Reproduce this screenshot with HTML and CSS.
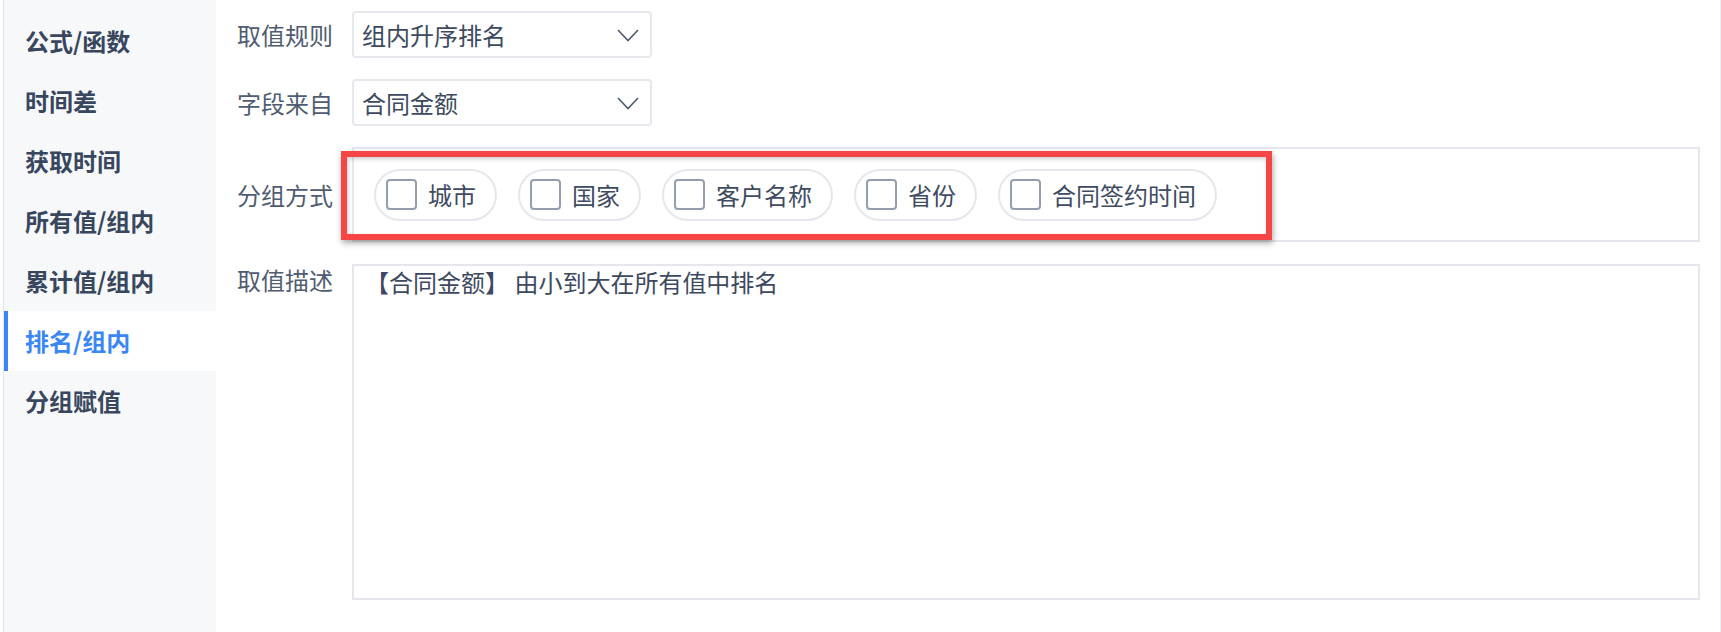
FILE: index.html
```html
<!DOCTYPE html>
<html lang="zh-CN">
<head>
<meta charset="utf-8">
<title>排名/组内</title>
<link rel="stylesheet" href="styles.css">
</head>
<body>
<div class="app">
  <aside class="sidebar">
    <ul class="nav">
      <li class="nav-item">公式/函数</li>
      <li class="nav-item">时间差</li>
      <li class="nav-item">获取时间</li>
      <li class="nav-item">所有值/组内</li>
      <li class="nav-item">累计值/组内</li>
      <li class="nav-item active">排名/组内</li>
      <li class="nav-item">分组赋值</li>
    </ul>
  </aside>
  <main class="form">
    <div class="row">
      <label class="label">取值规则</label>
      <div class="select">
        <span class="select-text">组内升序排名</span>
        <svg class="chevron" width="22" height="13" viewBox="0 0 22 13"><polyline points="1,1 11,11.5 21,1" fill="none" stroke="#4f5a6f" stroke-width="1.6"/></svg>
      </div>
    </div>
    <div class="row">
      <label class="label">字段来自</label>
      <div class="select">
        <span class="select-text">合同金额</span>
        <svg class="chevron" width="22" height="13" viewBox="0 0 22 13"><polyline points="1,1 11,11.5 21,1" fill="none" stroke="#4f5a6f" stroke-width="1.6"/></svg>
      </div>
    </div>
    <div class="row row-group">
      <label class="label">分组方式</label>
      <div class="group-box">
        <div class="chip"><span class="checkbox"></span><span class="chip-text">城市</span></div>
        <div class="chip"><span class="checkbox"></span><span class="chip-text">国家</span></div>
        <div class="chip"><span class="checkbox"></span><span class="chip-text">客户名称</span></div>
        <div class="chip"><span class="checkbox"></span><span class="chip-text">省份</span></div>
        <div class="chip"><span class="checkbox"></span><span class="chip-text">合同签约时间</span></div>
      </div>
      <div class="annotation"></div>
    </div>
    <div class="row row-desc">
      <label class="label">取值描述</label>
      <div class="textarea">【合同金额】 由小到大在所有值中排名</div>
    </div>
  </main>
</div>
</body>
</html>
```

FILE: styles.css
```css
* { box-sizing: border-box; }
html, body { margin: 0; padding: 0; background: #ffffff; }
body {
  font-family: "Noto Sans CJK SC", "Noto Sans", sans-serif;
  font-size: 24px;
  color: #3d4960;
}
.app {
  display: flex;
  height: 632px;
  margin-left: 3px;
  border-left: 1px solid #e3e5ea;
  border-right: 1px solid #eceef2;
}
.sidebar {
  width: 212px;
  flex: none;
  background: #f7f8fa;
  padding-top: 11px;
}
.nav { list-style: none; margin: 0; padding: 0; }
.nav-item {
  height: 60px;
  line-height: 60px;
  padding-left: 21px;
  font-weight: bold;
  color: #38465e;
  font-size: 24px;
}
.nav-item.active {
  background: #ffffff;
  color: #3a86f5;
  border-left: 4px solid #3a86f5;
  padding-left: 17px;
}
.form {
  flex: 1;
  padding: 11px 20px 0 21px;
}
.row {
  display: flex;
  align-items: center;
  margin-bottom: 21px;
}
.label {
  width: 115px;
  flex: none;
  color: #505c71;
  line-height: 26px;
}
.select {
  width: 300px;
  height: 47px;
  border: 2px solid #e6e8ed;
  border-radius: 4px;
  display: flex;
  align-items: center;
  justify-content: space-between;
  padding: 0 11px 0 8px;
}
.select-text { color: #3d4960; line-height: 26px; }
.chevron { display: block; margin-top: 1px; }
.row-group { position: relative; margin-bottom: 22px; }
.group-box {
  flex: 1;
  height: 95px;
  border: 2px solid #e6e7ec;
  display: flex;
  align-items: center;
  gap: 21px;
  padding-left: 20px;
}
.chip {
  height: 52px;
  border: 2px solid #e5e7ec;
  border-radius: 26px;
  display: flex;
  align-items: center;
  padding: 0 19px 0 10px;
}
.checkbox {
  width: 31px;
  height: 31px;
  border: 2px solid #959eae;
  border-radius: 4px;
  margin-right: 11px;
  background: #fff;
}
.chip-text { color: #3f4b62; line-height: 26px; }
.annotation {
  position: absolute;
  left: 104px;
  top: 4px;
  width: 931px;
  height: 89px;
  border: 6px solid #f64545;
  box-shadow: 1px 3px 6px rgba(0, 0, 0, 0.35), inset 1px 2px 4px rgba(0, 0, 0, 0.2);
  pointer-events: none;
}
.row-desc { align-items: flex-start; margin-bottom: 0; }
.row-desc .label { padding-top: 3px; }
.textarea {
  flex: 1;
  height: 336px;
  border: 2px solid #e6e7ec;
  padding: 3px 11px;
  line-height: 26px;
  color: #3d4960;
}
```
